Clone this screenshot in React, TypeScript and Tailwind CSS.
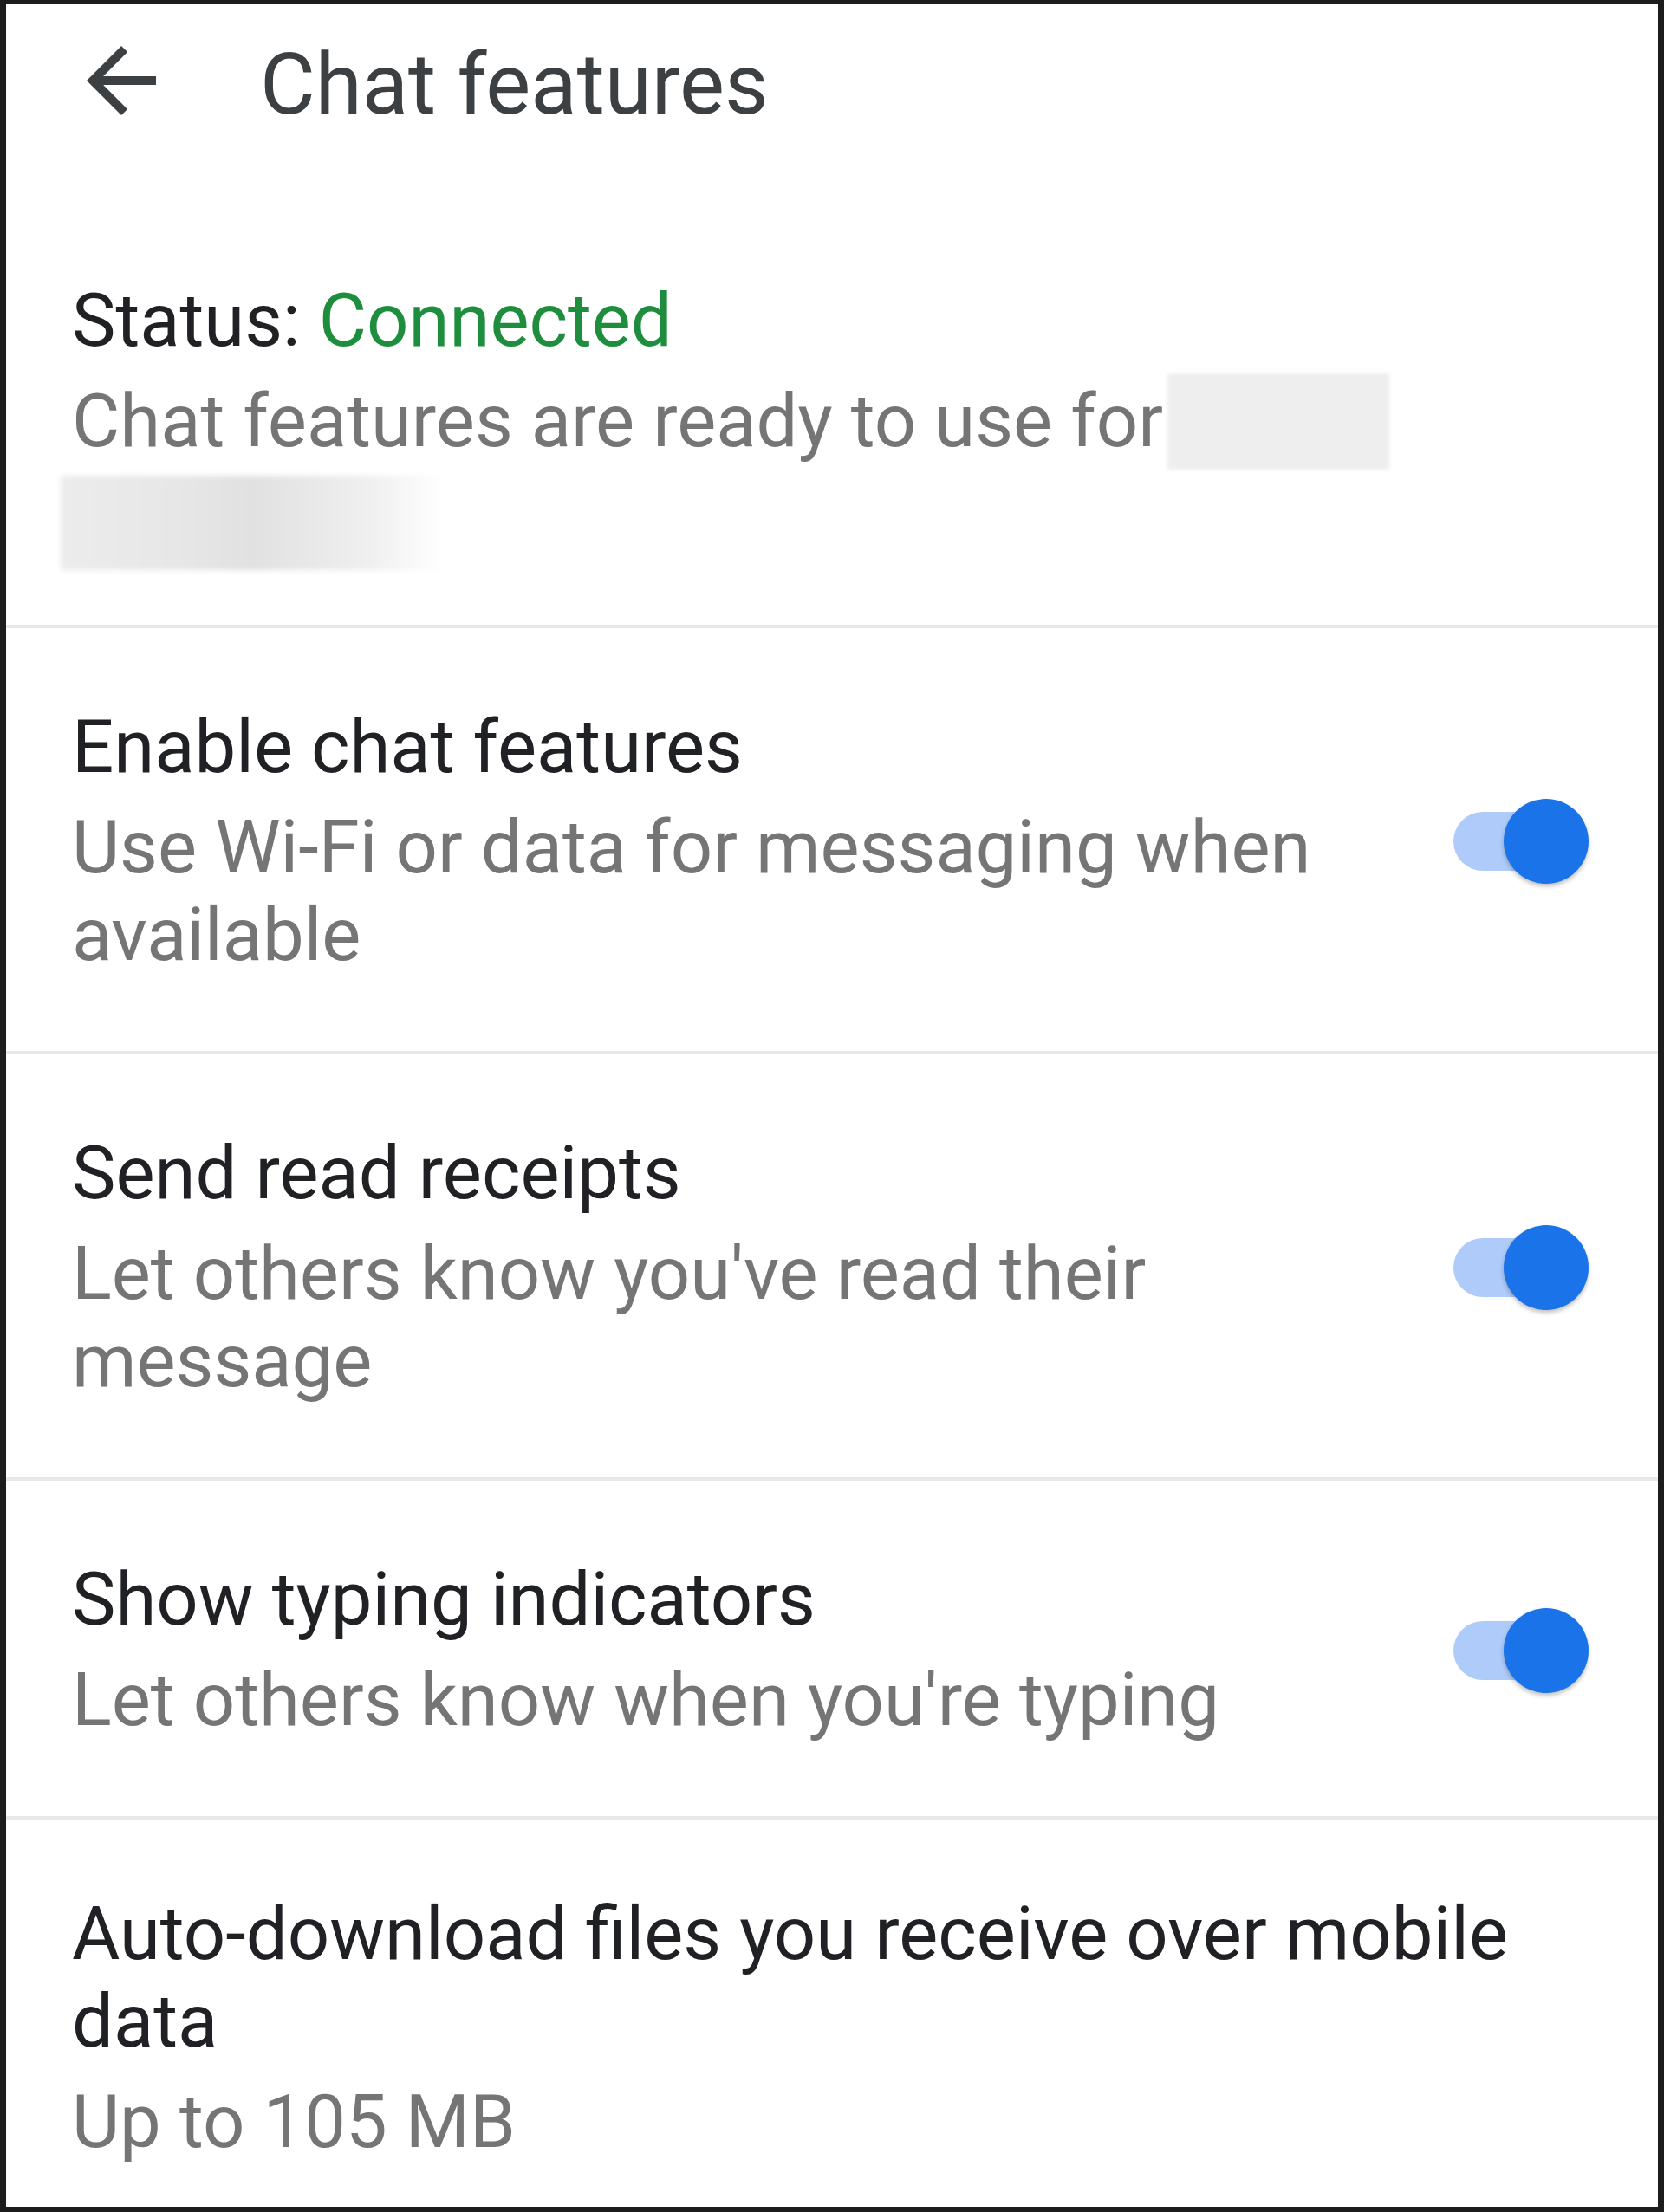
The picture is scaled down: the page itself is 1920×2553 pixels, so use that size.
import React from "react";

type Row = { title: string; lines: string[]; toggle?: boolean };

const rows: Row[] = [
  { title: "Enable chat features", lines: ["Use Wi-Fi or data for messaging when", "available"], toggle: true },
  { title: "Send read receipts", lines: ["Let others know you've read their", "message"], toggle: true },
  { title: "Show typing indicators", lines: ["Let others know when you're typing"], toggle: true },
];

function Toggle() {
  return (
    <div className="relative h-[98px] w-[156px] shrink-0">
      <div className="absolute left-0 top-[15px] h-[68px] w-[140px] rounded-full bg-[#aecbfa]" />
      <div className="absolute right-0 top-0 h-[98px] w-[98px] rounded-full bg-[#1a73e8] shadow-[0_3px_5px_rgba(0,0,0,0.25)]" />
    </div>
  );
}

function Divider() {
  return <div className="h-[4px] w-full bg-[#e8e8e8]" />;
}

export default function App() {
  return (
    <div
      className="h-[2553px] w-[1920px] border-b-[6px] border-l-[7px] border-r-[7px] border-t-[5px] border-[#1c1c1c] bg-white text-[85px] leading-[101px] text-[#202124]"
      style={{ fontFamily: "Roboto, 'Noto Sans', sans-serif" }}
    >
      {/* app bar */}
      <div className="flex h-[186px] items-center">
        <svg viewBox="0 0 24 24" className="ml-[73px] h-[120px] w-[120px] -translate-y-[5px] fill-[#3c4043]">
          <path d="M20 11H7.83l5.59-5.59L12 4l-8 8 8 8 1.41-1.41L7.83 13H20v-2z" />
        </svg>
        <h1 className="ml-[100px] text-[98px] font-normal leading-none text-[#3c4043]">Chat features</h1>
      </div>

      {/* status */}
      <div className="pb-[63px] pl-[76px] pt-[129px]">
        <div>
          Status: <span className="text-[#1e8e3e]">Connected</span>
        </div>
        <div className="mt-[15px] flex items-center text-[#757575]">
          <span>Chat features are ready to use for</span>
          <div className="-my-[5px] ml-[5px] h-[111px] w-[256px] bg-[#eeeeee] blur-[2px]" />
        </div>
        <div className="-ml-[13px] mt-[12px] h-[109px] w-[443px] bg-[linear-gradient(90deg,#ececec_0%,#e7e7e7_30%,#e1e1e1_50%,#efefef_80%,#ffffff_100%)] blur-[3px]" />
      </div>
      <Divider />

      {rows.map((r) => (
        <React.Fragment key={r.title}>
          <div className="flex items-center gap-[100px] pb-[83px] pl-[76px] pr-[80px] pt-[87px]">
            <div className="flex-1">
              <div>{r.title}</div>
              <div className="mt-[15px] text-[#757575]">
                {r.lines.map((l) => (
                  <div key={l}>{l}</div>
                ))}
              </div>
            </div>
            {r.toggle && <Toggle />}
          </div>
          <Divider />
        </React.Fragment>
      ))}

      <div className="pl-[76px] pr-[80px] pt-[82px]">
        <div>Auto-download files you receive over mobile</div>
        <div>data</div>
        <div className="mt-[15px] text-[#757575]">Up to 105 MB</div>
      </div>
    </div>
  );
}
